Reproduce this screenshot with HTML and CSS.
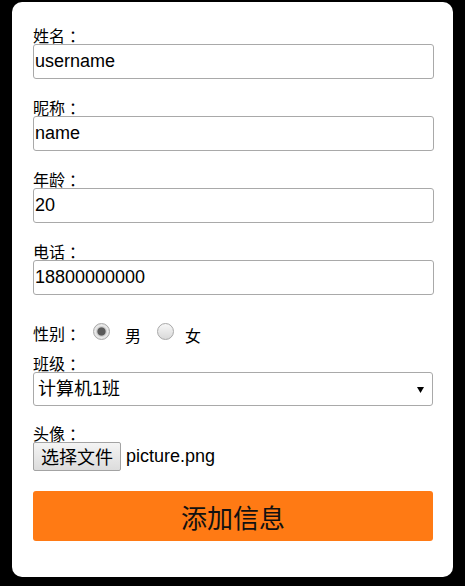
FILE: index.html
```html
<!DOCTYPE html>
<html lang="zh-CN">
<head>
<meta charset="utf-8">
<title>添加信息</title>
<link rel="stylesheet" href="styles.css">
</head>
<body>
<form class="card">
  <div class="field">
    <label class="label">姓名<span class="colon">：</span></label>
    <input class="text-input" type="text" value="username">
  </div>
  <div class="field">
    <label class="label">昵称<span class="colon">：</span></label>
    <input class="text-input" type="text" value="name">
  </div>
  <div class="field">
    <label class="label">年龄<span class="colon">：</span></label>
    <input class="text-input" type="text" value="20">
  </div>
  <div class="field">
    <label class="label">电话<span class="colon">：</span></label>
    <input class="text-input" type="text" value="18800000000">
  </div>
  <div class="sex-row">
    <span class="label-inline">性别<span class="colon">：</span></span>
    <input class="radio radio-male" type="radio" name="sex" checked>
    <span class="radio-text male-text">男</span>
    <input class="radio radio-female" type="radio" name="sex">
    <span class="radio-text">女</span>
  </div>
  <div class="field-class">
    <label class="label">班级<span class="colon">：</span></label>
    <div class="select-wrap">
      <select class="select">
        <option>计算机1班</option>
      </select>
      <svg class="select-arrow" width="7" height="6" viewBox="0 0 7 6"><path d="M0 0H7L3.5 6Z" fill="#000"/></svg>
    </div>
  </div>
  <div class="field-file">
    <label class="label">头像<span class="colon">：</span></label>
    <div class="file-row">
      <span class="file-btn">选择文件</span>
      <span class="file-name">picture.png</span>
    </div>
  </div>
  <button class="submit" type="button">添加信息</button>
</form>
</body>
</html>
```
FILE: styles.css
```css
html, body {
  margin: 0;
  padding: 0;
  background: #000;
}
body {
  height: 586px;
  overflow: hidden;
  font-family: "Liberation Sans", Arial, "Noto Sans CJK SC", sans-serif;
  color: #000;
}
.card {
  margin: 2px 12px 0 12px;
  background: #fff;
  border-radius: 10px;
  padding: 24px 20px 36px 21px;
  display: flex;
  flex-direction: column;
}
.field {
  display: flex;
  flex-direction: column;
  margin-bottom: 19px;
}
.label, .label-inline {
  font-family: "Noto Sans CJK SC", sans-serif;
  font-size: 16px;
  line-height: 18px;
  display: block;
}
.colon {
  padding-left: 4px;
}
.text-input {
  box-sizing: border-box;
  width: 401px;
  height: 35px;
  margin: 0;
  padding: 0 0 0 1px;
  border: 1px solid #a9a9a9;
  border-radius: 3px;
  font-family: "Liberation Sans", Arial, sans-serif;
  font-size: 18px;
  color: #000;
  background: #fff;
  outline: none;
}
.sex-row {
  display: flex;
  align-items: center;
  height: 28px;
  margin-top: 3px;
}
.label-inline {
  margin-top: 4px;
}
.radio {
  appearance: none;
  -webkit-appearance: none;
  width: 17px;
  height: 17px;
  margin: 0;
  border: 1px solid #a8a8a8;
  border-radius: 50%;
  background: linear-gradient(#f7f7f7, #d9d9d9);
  box-sizing: border-box;
}
.radio:checked {
  background: radial-gradient(circle at 50% 50%, #5a5a5a 0, #5a5a5a 3.6px, #c8c8c8 4.6px, #e9e9e9 6px, #d7d7d7 100%);
}
.radio-male {
  margin-left: 8px;
}
.radio-text {
  font-family: "Noto Sans CJK SC", sans-serif;
  font-size: 16px;
  line-height: 18px;
  margin-left: 15px;
  margin-top: 8px;
}
.radio-text + .radio-female {
  margin-left: 16px;
}
.radio-female + .radio-text {
  margin-left: 11px;
}
.field-class {
  display: flex;
  flex-direction: column;
  margin-top: 9px;
}
.select-wrap {
  position: relative;
  width: 400px;
}
.select {
  appearance: none;
  -webkit-appearance: none;
  box-sizing: border-box;
  width: 400px;
  height: 34px;
  margin: 0;
  padding: 0 0 0 4px;
  border: 1px solid #a9a9a9;
  border-radius: 3px;
  background: #fff;
  font-family: "Liberation Sans", Arial, "Noto Sans CJK SC", sans-serif;
  font-size: 18px;
  color: #000;
  outline: none;
}
.select-arrow {
  position: absolute;
  right: 9px;
  top: 15px;
}
.field-file {
  display: flex;
  flex-direction: column;
  margin-top: 18px;
}
.file-row {
  display: flex;
  align-items: center;
}
.file-btn {
  box-sizing: border-box;
  height: 29px;
  padding: 0 7px;
  border: 1px solid #a3a3a3;
  border-radius: 2px;
  background: linear-gradient(#f4f4f4, #dcdcdc);
  font-family: "Noto Sans CJK SC", sans-serif;
  font-size: 18px;
  line-height: 27px;
  display: flex;
  align-items: center;
}
.file-name {
  margin-left: 5px;
  font-family: "Liberation Sans", Arial, sans-serif;
  font-size: 18px;
}
.submit {
  margin: 20px 0 0 0;
  width: 400px;
  height: 50px;
  border: none;
  border-radius: 3px;
  background: #ff7a14;
  color: #111;
  font-family: "Noto Sans CJK SC", sans-serif;
  font-size: 26px;
  padding: 0;
}
```
